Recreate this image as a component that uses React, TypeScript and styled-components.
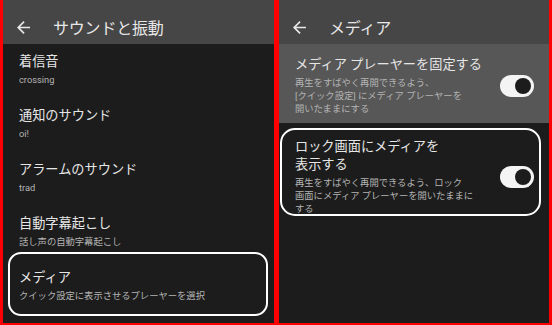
import React from 'react';
import styled, { createGlobalStyle } from 'styled-components';

const GlobalStyle = createGlobalStyle`
    html, body {
        margin: 0;
        padding: 0;
        background: #ff0000;
    }
    body {
        font-family: Roboto, "Noto Sans CJK JP", sans-serif;
    }
`;

type Entry = { title: string; sub: string };

const soundItems: Entry[] = [
    { title: '着信音', sub: 'crossing' },
    { title: '通知のサウンド', sub: 'oi!' },
    { title: 'アラームのサウンド', sub: 'trad' },
    { title: '自動字幕起こし', sub: '話し声の自動字幕起こし' },
];

function BackArrow() {
    return (
        <svg width="13" height="13" viewBox="4 4 16 16" fill="#e8e8e8">
            <path d="M20 11H7.83l5.59-5.59L12 4l-8 8 8 8 1.41-1.41L7.83 13H20v-2z" />
        </svg>
    );
}

function App() {
    return (
        <>
            <GlobalStyle />
            <Frame>
                <Screen>
                    <Header>
                        <BackArrow />
                        <HeaderTitle>サウンドと振動</HeaderTitle>
                    </Header>
                    <List>
                        {soundItems.map((item) => (
                            <Item key={item.title}>
                                <Title>{item.title}</Title>
                                <Sub>{item.sub}</Sub>
                            </Item>
                        ))}
                        <Item $ring>
                            <Title>メディア</Title>
                            <Sub>クイック設定に表示させるプレーヤーを選択</Sub>
                        </Item>
                    </List>
                </Screen>
                <Screen>
                    <Header>
                        <BackArrow />
                        <HeaderTitle>メディア</HeaderTitle>
                    </Header>
                    <List>
                        <SwitchRow $shaded>
                            <TextCol>
                                <Title>メディア プレーヤーを固定する</Title>
                                <Sub>
                                    再生をすばやく再開できるよう、<br />
                                    [クイック設定] にメディア プレーヤーを<br />
                                    開いたままにする
                                </Sub>
                            </TextCol>
                            <Toggle />
                        </SwitchRow>
                        <SwitchRow $ring>
                            <TextCol>
                                <Title>
                                    ロック画面にメディアを<br />
                                    表示する
                                </Title>
                                <Sub>
                                    再生をすばやく再開できるよう、ロック<br />
                                    画面にメディア プレーヤーを開いたままに<br />
                                    する
                                </Sub>
                            </TextCol>
                            <Toggle />
                        </SwitchRow>
                    </List>
                </Screen>
            </Frame>
        </>
    );
}

export default App;

const Frame = styled.div`
    display: grid;
    grid-template-columns: 271px 270px;
    gap: 5px;
    width: 552px;
    height: 325px;
    box-sizing: border-box;
    padding: 0 3px 2px 3px;
    background: #ff0000;
`;

const Screen = styled.div`
    display: flex;
    flex-direction: column;
    background: #1c1c1c;
    overflow: hidden;
`;

const Header = styled.div`
    display: flex;
    align-items: center;
    gap: 23px;
    height: 44px;
    box-sizing: border-box;
    flex-shrink: 0;
    padding: 10px 0 0 14px;
    background: #464646;
`;

const HeaderTitle = styled.span`
    font-size: 16px;
    color: #e8e8e8;
    letter-spacing: -0.2px;
`;

const List = styled.div`
    display: flex;
    flex-direction: column;
`;

const Item = styled.div<{ $ring?: boolean }>`
    position: relative;
    display: flex;
    flex-direction: column;
    padding: 9px 19px 12px 16px;

    &::after {
        content: '';
        display: ${({ $ring }) => ($ring ? 'block' : 'none')};
        position: absolute;
        top: -8px;
        bottom: -2px;
        left: 5px;
        right: 6px;
        border: 2px solid #ffffff;
        border-radius: 13px;
    }
`;

const SwitchRow = styled.div<{ $ring?: boolean; $shaded?: boolean }>`
    position: relative;
    display: flex;
    align-items: center;
    justify-content: space-between;
    padding: ${({ $ring }) => ($ring ? '15px 15px 3px 16px' : '12px 15px 8px 16px')};
    background: ${({ $shaded }) => ($shaded ? '#575757' : 'transparent')};

    &::after {
        content: '';
        display: ${({ $ring }) => ($ring ? 'block' : 'none')};
        position: absolute;
        top: 5px;
        bottom: 2px;
        left: 1px;
        right: 8px;
        border: 2px solid #ffffff;
        border-radius: 15px;
    }
`;

const TextCol = styled.div`
    display: flex;
    flex-direction: column;
`;

const Title = styled.div`
    font-size: 13.2px;
    line-height: 18px;
    color: #e6e6e6;
    white-space: nowrap;
`;

const Sub = styled.div`
    margin-top: 2px;
    font-size: 9.3px;
    line-height: 13px;
    color: #b4b4b4;
    white-space: nowrap;
`;

const Toggle = styled.div`
    position: relative;
    width: 34px;
    height: 22px;
    flex-shrink: 0;
    border-radius: 11px;
    background: #f4f4f4;

    &::before {
        content: '';
        position: absolute;
        top: 3px;
        right: 3px;
        width: 16px;
        height: 16px;
        border-radius: 50%;
        background: #1c1c1c;
    }
`;
